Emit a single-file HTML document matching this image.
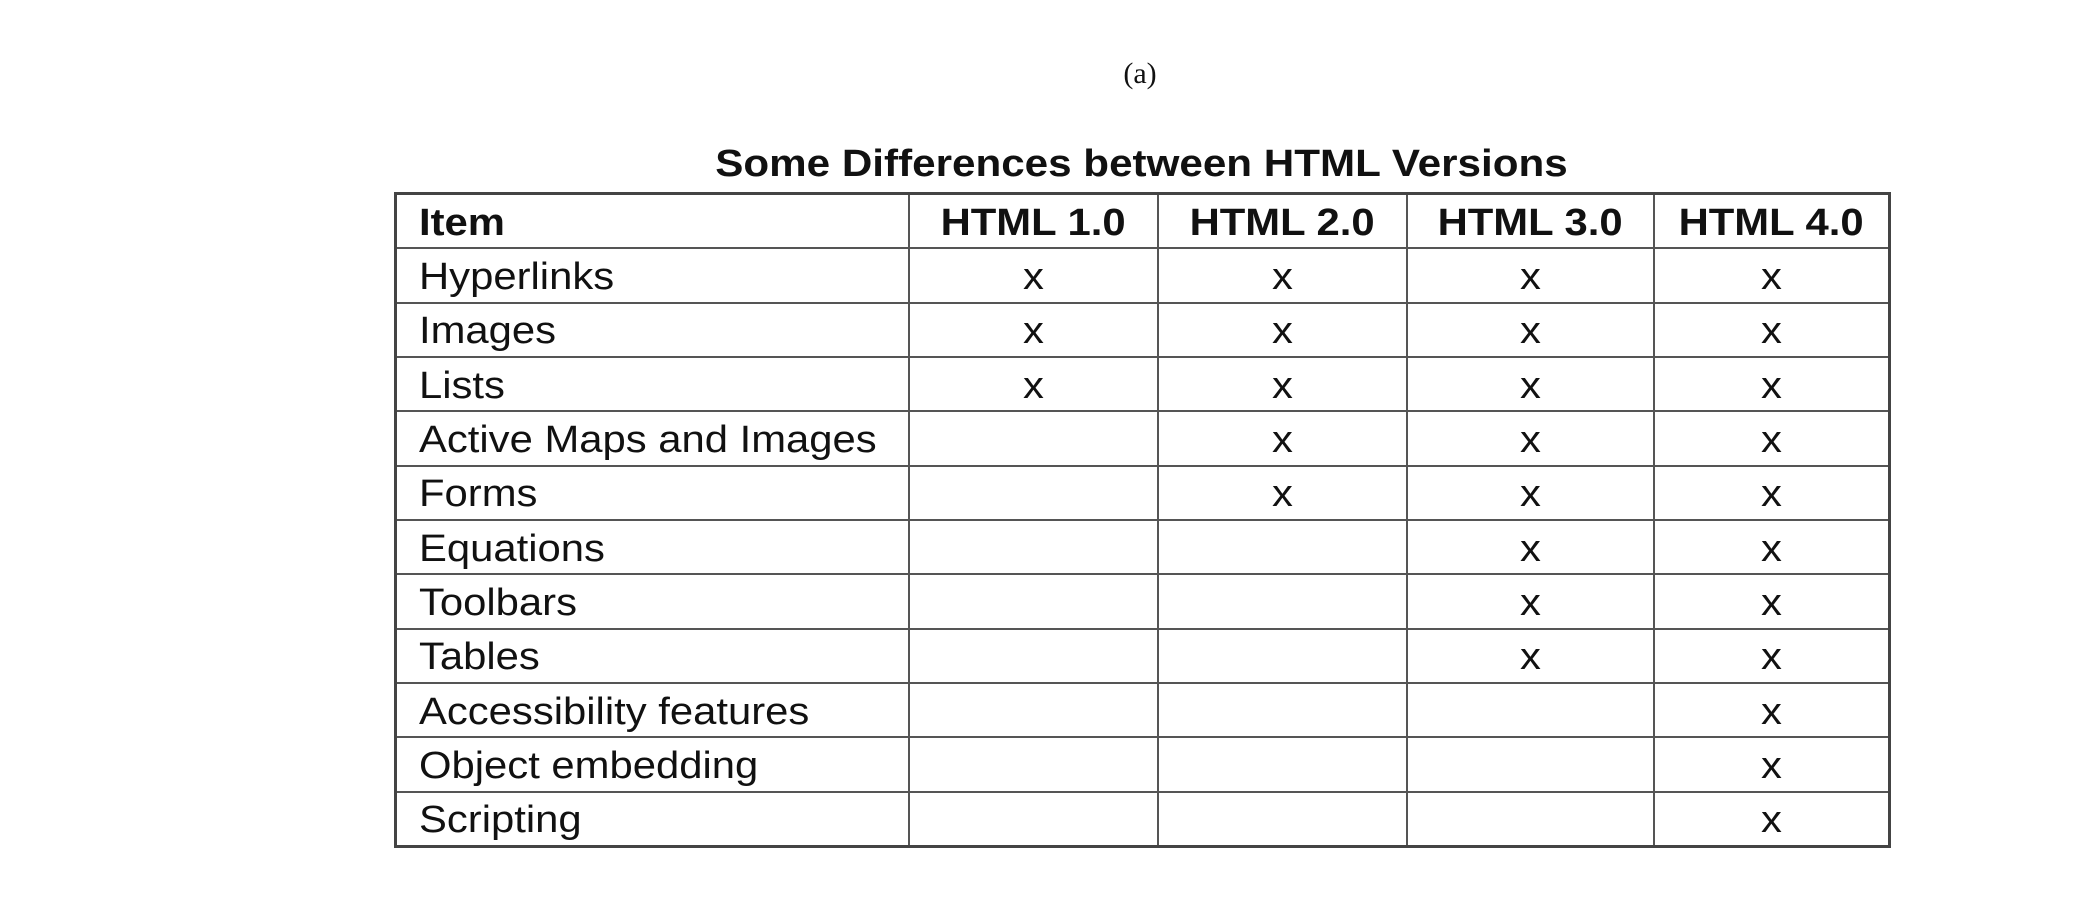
<!DOCTYPE html>
<html><head><style>
html,body{margin:0;padding:0;background:#fff;width:2074px;height:909px;overflow:hidden}
body{position:relative;font-family:"Liberation Sans",Arial,sans-serif;color:#111}
.a{position:absolute;top:57px;left:0;width:2280px;text-align:center;font-family:"Liberation Serif",serif;font-size:30px}
.t{position:absolute;top:143px;left:394px;width:1495px;text-align:center;font-weight:bold;font-size:38px;transform:scaleX(1.11);transform-origin:center}
table{position:absolute;left:394px;top:192px;width:1494px;height:656px;border-collapse:collapse;border:3px solid #444;table-layout:fixed}
td{border:2px solid #555;font-size:38px;padding:3px 0 0 0;height:49px;text-align:center;line-height:1;overflow:hidden;white-space:nowrap}
td span{display:inline-block;transform:scaleX(1.1);transform-origin:center}
td:first-child{text-align:left;padding-left:22px}
td:first-child span{transform-origin:left}
tr:first-child td{font-weight:bold}
</style></head><body>
<div class="a">(a)</div>
<div class="t">Some Differences between HTML Versions</div>
<table>
<colgroup><col style="width:513px"><col style="width:249px"><col style="width:249px"><col style="width:247px"><col style="width:236px"></colgroup>
<tr><td><span>Item</span></td><td><span>HTML 1.0</span></td><td><span>HTML 2.0</span></td><td><span>HTML 3.0</span></td><td><span>HTML 4.0</span></td></tr>
<tr><td><span>Hyperlinks</span></td><td><span>x</span></td><td><span>x</span></td><td><span>x</span></td><td><span>x</span></td></tr>
<tr><td><span>Images</span></td><td><span>x</span></td><td><span>x</span></td><td><span>x</span></td><td><span>x</span></td></tr>
<tr><td><span>Lists</span></td><td><span>x</span></td><td><span>x</span></td><td><span>x</span></td><td><span>x</span></td></tr>
<tr><td><span>Active Maps and Images</span></td><td></td><td><span>x</span></td><td><span>x</span></td><td><span>x</span></td></tr>
<tr><td><span>Forms</span></td><td></td><td><span>x</span></td><td><span>x</span></td><td><span>x</span></td></tr>
<tr><td><span>Equations</span></td><td></td><td></td><td><span>x</span></td><td><span>x</span></td></tr>
<tr><td><span>Toolbars</span></td><td></td><td></td><td><span>x</span></td><td><span>x</span></td></tr>
<tr><td><span>Tables</span></td><td></td><td></td><td><span>x</span></td><td><span>x</span></td></tr>
<tr><td><span>Accessibility features</span></td><td></td><td></td><td></td><td><span>x</span></td></tr>
<tr><td><span>Object embedding</span></td><td></td><td></td><td></td><td><span>x</span></td></tr>
<tr><td><span>Scripting</span></td><td></td><td></td><td></td><td><span>x</span></td></tr>
</table>
</body></html>
